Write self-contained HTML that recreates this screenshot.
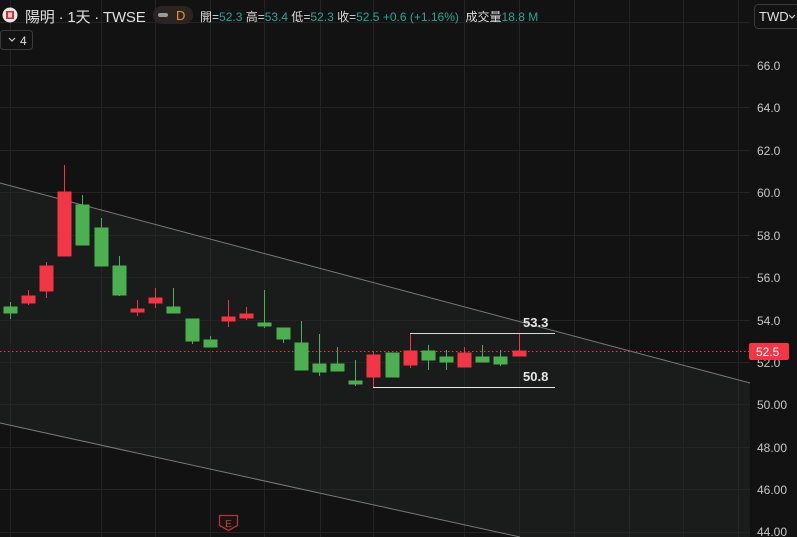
<!DOCTYPE html>
<html><head><meta charset="utf-8"><style>
body{margin:0;width:797px;height:537px;background:#121212;overflow:hidden;font-family:"Liberation Sans","Noto Sans CJK TC",sans-serif;}
svg{position:absolute;left:0;top:0}
.t{position:absolute;white-space:nowrap}
</style></head><body>
<svg width="797" height="537" xmlns="http://www.w3.org/2000/svg">
<rect width="797" height="537" fill="#121212"/>
<polygon points="0,183 750,383 750,537 520,537 0,423" fill="#1a1b1b"/>
<g stroke="#242424" stroke-width="1">
<line x1="10.5" y1="0" x2="10.5" y2="537"/><line x1="101.5" y1="0" x2="101.5" y2="537"/><line x1="155.5" y1="0" x2="155.5" y2="537"/><line x1="210.5" y1="0" x2="210.5" y2="537"/><line x1="264.5" y1="0" x2="264.5" y2="537"/><line x1="320.5" y1="0" x2="320.5" y2="537"/><line x1="373.5" y1="0" x2="373.5" y2="537"/><line x1="464.5" y1="0" x2="464.5" y2="537"/><line x1="519.5" y1="0" x2="519.5" y2="537"/><line x1="574.5" y1="0" x2="574.5" y2="537"/><line x1="629.5" y1="0" x2="629.5" y2="537"/><line x1="683.5" y1="0" x2="683.5" y2="537"/><line x1="738.5" y1="0" x2="738.5" y2="537"/>
<line x1="0" y1="22.5" x2="750" y2="22.5"/>
<line x1="0" y1="65.5" x2="750" y2="65.5"/><line x1="0" y1="107.5" x2="750" y2="107.5"/><line x1="0" y1="150.5" x2="750" y2="150.5"/><line x1="0" y1="192.5" x2="750" y2="192.5"/><line x1="0" y1="235.5" x2="750" y2="235.5"/><line x1="0" y1="277.5" x2="750" y2="277.5"/><line x1="0" y1="320.5" x2="750" y2="320.5"/><line x1="0" y1="362.5" x2="750" y2="362.5"/><line x1="0" y1="404.5" x2="750" y2="404.5"/><line x1="0" y1="447.5" x2="750" y2="447.5"/><line x1="0" y1="489.5" x2="750" y2="489.5"/><line x1="0" y1="532.5" x2="750" y2="532.5"/>
</g>
<line x1="0" y1="183" x2="750" y2="383" stroke="#7a7a7a" stroke-width="1"/>
<line x1="0" y1="423" x2="520" y2="537" stroke="#7a7a7a" stroke-width="1"/>
<line x1="0" y1="351.5" x2="750" y2="351.5" stroke="#f23645" stroke-width="1" stroke-dasharray="1.5,2.5"/>
<g stroke-width="1">
<g fill="#4caf50" stroke="#4caf50">
<line x1="10.5" y1="302" x2="10.5" y2="319"/><rect x="4" y="307" width="13" height="6"/>
<line x1="82.5" y1="195" x2="82.5" y2="245"/><rect x="76" y="205" width="13" height="40"/>
<line x1="101.5" y1="218" x2="101.5" y2="266"/><rect x="95" y="228" width="13" height="38"/>
<line x1="119.5" y1="256" x2="119.5" y2="296"/><rect x="113" y="266" width="13" height="29"/>
<line x1="173.5" y1="288" x2="173.5" y2="313"/><rect x="167" y="307" width="13" height="6"/>
<line x1="192.5" y1="319" x2="192.5" y2="344"/><rect x="186" y="319" width="13" height="22"/>
<line x1="210.5" y1="336" x2="210.5" y2="347"/><rect x="204" y="340" width="13" height="7"/>
<line x1="264.5" y1="290" x2="264.5" y2="328"/><rect x="258" y="323" width="13" height="3"/>
<line x1="283.5" y1="328" x2="283.5" y2="343"/><rect x="277" y="328" width="13" height="11"/>
<line x1="301.5" y1="321" x2="301.5" y2="370"/><rect x="295" y="343" width="13" height="27"/>
<line x1="319.5" y1="334" x2="319.5" y2="376"/><rect x="313" y="364" width="13" height="8"/>
<line x1="337.5" y1="347" x2="337.5" y2="371"/><rect x="331" y="364" width="13" height="7"/>
<line x1="355.5" y1="360" x2="355.5" y2="386"/><rect x="349" y="381" width="13" height="3"/>
<rect x="386" y="353" width="13" height="24"/>
<line x1="428.5" y1="345" x2="428.5" y2="370"/><rect x="422" y="351" width="13" height="9"/>
<line x1="446.5" y1="350" x2="446.5" y2="370"/><rect x="440" y="357" width="13" height="5"/>
<line x1="482.5" y1="345" x2="482.5" y2="362"/><rect x="476" y="357" width="13" height="5"/>
<line x1="500.5" y1="350" x2="500.5" y2="366"/><rect x="494" y="357" width="13" height="7"/>
</g>
<g fill="#f23645" stroke="#f23645">
<line x1="28.5" y1="290" x2="28.5" y2="305"/><rect x="22" y="296" width="13" height="7"/>
<line x1="46.5" y1="262" x2="46.5" y2="298"/><rect x="40" y="266" width="13" height="25"/>
<line x1="64.5" y1="165" x2="64.5" y2="256"/><rect x="58" y="192" width="13" height="64"/>
<line x1="137.5" y1="300" x2="137.5" y2="316"/><rect x="131" y="309" width="13" height="3"/>
<line x1="155.5" y1="288" x2="155.5" y2="308"/><rect x="149" y="298" width="13" height="5"/>
<line x1="228.5" y1="300" x2="228.5" y2="327"/><rect x="222" y="317" width="13" height="4"/>
<line x1="246.5" y1="307" x2="246.5" y2="320"/><rect x="240" y="314" width="13" height="4"/>
<line x1="373.5" y1="351" x2="373.5" y2="388"/><rect x="367" y="355" width="13" height="22"/>
<line x1="410.5" y1="333" x2="410.5" y2="368"/><rect x="404" y="351" width="13" height="14"/>
<line x1="464.5" y1="347" x2="464.5" y2="367"/><rect x="458" y="353" width="13" height="14"/>
<line x1="519.5" y1="333" x2="519.5" y2="356"/><rect x="513" y="351" width="13" height="5"/>
</g>
</g>
<line x1="410" y1="333.5" x2="555" y2="333.5" stroke="#d8d8d8" stroke-width="1"/>
<line x1="373" y1="387.5" x2="555" y2="387.5" stroke="#e8e8e8" stroke-width="1"/>
<path d="M219.5 515.5 h18 v10 l-9 5 l-9 -5 z" fill="#1a1212" stroke="#b8323e" stroke-width="1.3"/>
<text x="228.5" y="527" fill="#c83a46" font-size="10" text-anchor="middle" font-family="Liberation Sans">E</text>
<g fill="#c8c8c8" font-size="12" font-family="Liberation Sans">
<text x="757" y="70">66.0</text><text x="757" y="112">64.0</text><text x="757" y="155">62.0</text><text x="757" y="197">60.0</text><text x="757" y="240">58.0</text><text x="757" y="282">56.0</text><text x="757" y="325">54.0</text><text x="757" y="367">52.0</text><text x="757" y="409">50.00</text><text x="757" y="452">48.00</text><text x="757" y="494">46.00</text><text x="757" y="536">44.00</text>
</g>
<rect x="749" y="343" width="40" height="17" rx="2" fill="#f23645"/>
<text x="756" y="356" fill="#fff" font-size="12" font-family="Liberation Sans">52.5</text>
<text x="523" y="327" fill="#e6e6e6" font-size="13" font-weight="bold" font-family="Liberation Sans">53.3</text>
<text x="523" y="381" fill="#e6e6e6" font-size="13" font-weight="bold" font-family="Liberation Sans">50.8</text>
<rect x="754.5" y="4.5" width="45" height="24" rx="4" fill="#121212" stroke="#3a3a3a"/>
<text x="759" y="21" fill="#e0e0e0" font-size="13" font-family="Liberation Sans">TWD</text>
<path d="M789 15 l3 3 l3 -3" fill="none" stroke="#ccc" stroke-width="1.2"/>
<circle cx="10" cy="15" r="7.5" fill="#e8e8e8"/>
<rect x="6" y="11" width="8" height="8" fill="#c33"/>
<rect x="8" y="12.5" width="4" height="5" fill="#e8c8c8"/>
<rect x="153" y="6" width="40" height="18" rx="9" fill="#2a2522"/>
<rect x="158" y="13" width="10" height="4" rx="2" fill="#9a9a9a"/>
<text x="176" y="20" fill="#f7931a" font-size="13" font-family="Liberation Sans">D</text>
<rect x="0.5" y="30.5" width="32" height="19" rx="3" fill="#121212" stroke="#3a3a3a"/>
<path d="M9 38 l3 3 l3 -3" fill="none" stroke="#ccc" stroke-width="1.2"/>
<text x="20" y="45" fill="#ddd" font-size="12" font-family="Liberation Sans">4</text>
</svg>
<div class="t" style="left:25px;top:6px;font-size:15px;color:#e0e0e0;letter-spacing:-0.2px">陽明 · 1天 · TWSE</div>
<div class="t" style="left:200px;top:8px;font-size:12px;color:#ddd">開=<span style="color:#26a69a">52.3</span> 高=<span style="color:#26a69a">53.4</span> 低=<span style="color:#26a69a">52.3</span> 收=<span style="color:#26a69a">52.5 +0.6 (+1.16%)</span> &nbsp;成交量<span style="color:#26a69a">18.8 M</span></div>
</body></html>
